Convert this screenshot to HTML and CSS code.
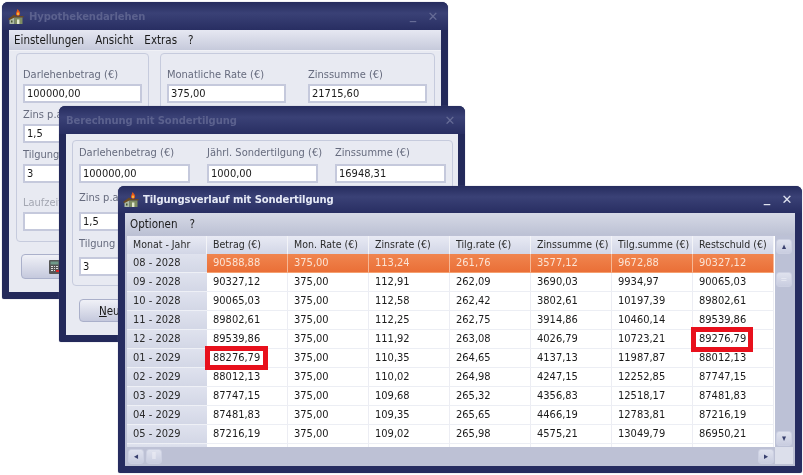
FILE: index.html
```html
<!DOCTYPE html>
<html lang="de">
<head>
<meta charset="utf-8">
<title>Tilgungsverlauf</title>
<link rel="stylesheet" href="styles.css">
</head>
<body>
<svg class="defs" width="0" height="0" aria-hidden="true">
  <symbol id="house" viewBox="0 0 17 15">
    <path d="M9.5 0 C11.5 2 12.5 3.5 12 5.5 C11.6 7 8.6 7 8 5.5 C7.6 4 8.8 2.5 9.5 0z" fill="#e8581a"/>
    <ellipse cx="10" cy="4.8" rx="1" ry="1.5" fill="#f8c040"/>
    <path d="M0 10 6 5.5 8 7 15.5 7 15.5 8.5 7 8.5 2 11.5z" fill="#6b4a22"/>
    <path d="M1.5 11 6.5 8.5 6.5 15 1.5 15z" fill="#aebba4"/>
    <path d="M6.5 8.5 14.5 8.5 14.5 15 6.5 15z" fill="#7f8d62"/>
    <rect x="3" y="11.5" width="1.5" height="2" fill="#47552f"/>
    <rect x="9" y="10.5" width="2.4" height="4.5" fill="#e2e8cf"/>
  </symbol>
</svg>

<section class="win win-a">
  <header class="title"><svg class="ico"><use href="#house"/></svg><span class="title-text dim">Hypothekendarlehen</span><span class="ctl min dim">_</span><span class="ctl dim">✕</span></header>
  <div class="inner">
    <nav class="menu"><span>Einstellungen</span><span>Ansicht</span><span>Extras</span><span>?</span></nav>
    <div class="pane">
      <div class="groups-a">
        <div class="group g-left">
          <label class="lab">Darlehenbetrag (€)</label><div class="inp w-a">100000,00</div>
          <label class="lab l2">Zins p.a.</label><div class="inp w-a">1,5</div>
          <label class="lab l2">Tilgung</label><div class="inp w-a">3</div>
          <label class="lab l3 off">Laufzeit</label><div class="inp w-a"></div>
        </div>
        <div class="group g-right">
          <div class="cell"><label class="lab">Monatliche Rate (€)</label><div class="inp w-a">375,00</div></div>
          <div class="cell"><label class="lab">Zinssumme (€)</label><div class="inp w-a">21715,60</div></div>
        </div>
      </div>
      <button class="btn btn-a"><svg class="calc" viewBox="0 0 11 14"><rect width="11" height="14" rx="1" fill="#555"/><rect x="1.5" y="1.5" width="8" height="3" fill="#6f9a8a"/><path d="M2 6h2v1H2zM5 6h1v1H5zM7 6h2v1H7zM2 8h2v1H2zM5 8h1v1H5zM7 8h2v1H7zM2 10h2v1H2zM5 10h1v1H5z" fill="#ddd"/><rect x="7" y="10" width="3" height="2" fill="#e02020"/></svg></button>
    </div>
  </div>
</section>

<section class="win win-b">
  <header class="title"><span class="title-text dim">Berechnung mit Sondertilgung</span><span class="ctl dim">✕</span></header>
  <div class="inner">
    <div class="pane pane-b">
      <div class="group g-b">
        <div class="row-b">
          <div class="cell"><label class="lab">Darlehenbetrag (€)</label><div class="inp w-b">100000,00</div></div>
          <div class="cell"><label class="lab">Jährl. Sondertilgung (€)</label><div class="inp w-b">1000,00</div></div>
          <div class="cell"><label class="lab">Zinssumme (€)</label><div class="inp w-b">16948,31</div></div>
        </div>
        <label class="lab l4">Zins p.a.</label><div class="inp w-b">1,5</div>
        <label class="lab l5">Tilgung p.a.</label><div class="inp w-b">3</div>
      </div>
      <button class="btn btn-b"><span><u>N</u>eu</span></button>
    </div>
  </div>
</section>

<section class="win win-c">
  <header class="title"><svg class="ico"><use href="#house"/></svg><span class="title-text">Tilgungsverlauf mit Sondertilgung</span><span class="ctl min">_</span><span class="ctl">✕</span></header>
  <div class="inner">
    <nav class="menu menu-c"><span>Optionen</span><span>?</span></nav>
    <div class="grid-wrap">
      <div class="grid-main">
        <div class="grid">
          <div class="r head"><b>Monat - Jahr</b><b>Betrag (€)</b><b>Mon. Rate (€)</b><b>Zinsrate (€)</b><b>Tilg.rate (€)</b><b>Zinssumme (€)</b><b>Tilg.summe (€)</b><b>Restschuld (€)</b></div>
          <div class="r sel"><b>08 - 2028</b><i>90588,88</i><i>375,00</i><i>113,24</i><i>261,76</i><i>3577,12</i><i>9672,88</i><i>90327,12</i></div>
          <div class="r"><b>09 - 2028</b><i>90327,12</i><i>375,00</i><i>112,91</i><i>262,09</i><i>3690,03</i><i>9934,97</i><i>90065,03</i></div>
          <div class="r"><b>10 - 2028</b><i>90065,03</i><i>375,00</i><i>112,58</i><i>262,42</i><i>3802,61</i><i>10197,39</i><i>89802,61</i></div>
          <div class="r"><b>11 - 2028</b><i>89802,61</i><i>375,00</i><i>112,25</i><i>262,75</i><i>3914,86</i><i>10460,14</i><i>89539,86</i></div>
          <div class="r"><b>12 - 2028</b><i>89539,86</i><i>375,00</i><i>111,92</i><i>263,08</i><i>4026,79</i><i>10723,21</i><i>89276,79</i></div>
          <div class="r"><b>01 - 2029</b><i>88276,79</i><i>375,00</i><i>110,35</i><i>264,65</i><i>4137,13</i><i>11987,87</i><i>88012,13</i></div>
          <div class="r"><b>02 - 2029</b><i>88012,13</i><i>375,00</i><i>110,02</i><i>264,98</i><i>4247,15</i><i>12252,85</i><i>87747,15</i></div>
          <div class="r"><b>03 - 2029</b><i>87747,15</i><i>375,00</i><i>109,68</i><i>265,32</i><i>4356,83</i><i>12518,17</i><i>87481,83</i></div>
          <div class="r"><b>04 - 2029</b><i>87481,83</i><i>375,00</i><i>109,35</i><i>265,65</i><i>4466,19</i><i>12783,81</i><i>87216,19</i></div>
          <div class="r"><b>05 - 2029</b><i>87216,19</i><i>375,00</i><i>109,02</i><i>265,98</i><i>4575,21</i><i>13049,79</i><i>86950,21</i></div>
          <div class="r last"><b></b><i></i><i></i><i></i><i></i><i></i><i></i><i></i></div>
        </div>
        <div class="hbar"><span class="sb-btn">◂</span><span class="sb-btn thumb">⦀</span><span class="spacer"></span><span class="sb-btn">▸</span></div>
      </div>
      <div class="vbar"><span class="sb-btn v up">▴</span><span class="sb-btn v thumb">=</span><span class="spacer"></span><span class="sb-btn v">▾</span><span class="corner"></span></div>
    </div>
    <span class="mark m1"></span>
    <span class="mark m2"></span>
  </div>
</section>
</body>
</html>
```
FILE: styles.css
```css
* { box-sizing: border-box; }
html, body { margin: 0; padding: 0; }
body {
  width: 803px; height: 475px; overflow: hidden; background: #fff; position: relative;
  font-family: "DejaVu Sans Condensed", "DejaVu Sans", sans-serif; font-stretch: condensed; font-size: 10.5px; color: #1a1a1a;
}
.defs { position: absolute; }
.win {
  position: absolute; display: flex; flex-direction: column;
  background: #23295a; border-radius: 6px 6px 2px 2px; padding: 0 7px 7px;
  box-shadow: 0 0 1px #7a7f9a; filter: blur(.3px);
}
.win-a { left: 2px; top: 2px; width: 446px; height: 297px; }
.win-b { left: 59px; top: 106px; width: 406px; height: 236px; }
.win-c { left: 118px; top: 186px; width: 684px; height: 287px; background: #262c60; }
.title {
  display: flex; align-items: center; flex: none; height: 28px;
  background: linear-gradient(#262c5e, #3a4176 40%, #282e62);
  margin: 0 -7px; padding: 0 5px 0 6px; border-radius: 6px 6px 0 0;
}
.win-c .title { height: 27px; padding-left: 5px; }
.win-c .ico { margin-right: 3px; }
.win-b .title { padding-left: 7px; }
.ico { width: 17px; height: 15px; flex: none; margin-right: 4px; }
.title-text { font: bold 10px "DejaVu Sans", sans-serif; letter-spacing: -.1px; color: #e6eaf6; flex: 1; white-space: nowrap; }
.title-text.dim { color: #5b618e; }
.ctl { width: 20px; text-align: center; color: #dfe3f0; font: bold 13px "DejaVu Sans", sans-serif; }
.ctl.dim { color: #666c96; }
.ctl.min { margin-top: -4px; }
.inner { flex: 1; display: flex; flex-direction: column; position: relative; background: #e8eaf2; min-height: 0; }
.menu {
  display: flex; flex: none; gap: 11px; height: 21px; align-items: center; padding: 0 5px;
  background: linear-gradient(#e6e8f2, #c6cadb); border-bottom: 1px solid #f0f1f6; color: #1a1a1a; font-size: 11.5px;
}
.pane { flex: 1; padding: 2px 6px 0 7px; display: flex; flex-direction: column; }
.pane-b { padding: 6px 12px 0 6px; }
.groups-a { display: flex; gap: 11px; height: 189px; flex: none; }
.group { border: 1px solid #c6cbdd; border-radius: 4px; padding: 14px 6px 0; color: #6d7286; }
.g-left { width: 133px; }
.g-right { width: 275px; display: flex; gap: 22px; }
.g-b { height: 146px; flex: none; width: 381px; padding-top: 5px; }
.row-b { display: grid; grid-template-columns: repeat(3, 111px); column-gap: 17px; }
.lab { display: block; height: 13px; line-height: 13px; color: #666b7e; white-space: nowrap; font-size: 11px; }
.l2 { margin-top: 5px; }
.l3 { margin-top: 13px; }
.l4 { margin: 8px 0 8px; }
.l5 { margin: 6px 0 7px; }
.off { color: #a4a7b2; }
.inp {
  height: 19px; line-height: 16px; margin-top: 3px; padding-left: 2px; background: #fff;
  border: 2px solid #c5c9dc; color: #1a1a1a; white-space: nowrap; font-size: 11px;
}
.w-a { width: 119px; }
.w-b { width: 111px; margin-top: 5px; }
.btn {
  display: flex; align-items: center; justify-content: flex-start; cursor: default;
  border: 1px solid #aab0ca; border-radius: 4px; background: linear-gradient(#f0f1f7, #c5c9dd);
  font: 11.5px "DejaVu Sans Condensed", "DejaVu Sans", sans-serif; color: #1a1a1a;
}
.btn-a { width: 118px; height: 25px; margin: 12px 0 0 5px; padding: 0 0 0 27px; }
.calc { width: 11px; height: 14px; }
.btn-b { width: 110px; height: 23px; margin: 13px 0 0 7px; padding: 0 0 0 19px; }
.menu-c { height: 22px; gap: 12px; padding: 0 5px; background: linear-gradient(#d6d9e6, #bcc1d4); border: 0; }
.grid-wrap { flex: 1; display: flex; min-height: 0; padding: 1px 2px 2px 2px; background: #bdc1d5; }
.grid-main { width: 649px; display: flex; flex-direction: column; min-height: 0; }
.grid { height: 211px; overflow: hidden; background: #fff; flex: none; }
.r { display: grid; grid-template-columns: 80px repeat(7, 81px); height: 19px; line-height: 18px; white-space: nowrap; font-size: 11px; }
.r b, .r i { font-weight: 400; font-style: normal; overflow: hidden; }
.r b { background: linear-gradient(#dfe2ee, #d3d7e6); border-bottom: 1px solid #eef0f6; padding-left: 6px; color: #2a2a2a; }
.r i { border-right: 1px solid #ecedf3; border-bottom: 1px solid #eceef4; padding-left: 6px; color: #1a1a1a; }
.head { height: 18px; line-height: 17px; }
.head b { padding-left: 6px; background: linear-gradient(#e8eaf4, #d2d6e6); border-right: 1px solid #f3f4f8; border-bottom: 0; font-size: 10.5px; }
.sel i { background: linear-gradient(#f0854f, #ea6f37); color: #fbe3d4; border-right-color: #f6b896; border-bottom-color: #f5a070; }
.last { height: 8px; }
.hbar { display: flex; flex: 1; padding: 1px 1px 0 1px; gap: 2px; align-items: center; }
.spacer { flex: 1; }
.sb-btn {
  display: flex; align-items: center; justify-content: center; width: 16px; height: 15px; flex: none;
  background: linear-gradient(#dfe2ee, #c9cde0); border: 1px solid #ccd0e2; border-radius: 3px;
  color: #39406e; font-size: 9px; line-height: 1;
}
.thumb { color: #f1f2f8; }
.vbar { width: 18px; display: flex; flex-direction: column; align-items: center; padding: 3px 0 0 0; background: #bcc1d6; }
.v { height: 15px; }
.up { margin-bottom: 18px; }
.corner { width: 18px; height: 17px; background: #dcdfeb; margin-top: 1px; flex: none; }
.mark { position: absolute; border: 5px solid #e8101c; background: transparent; width: 63px; height: 24px; }
.m1 { left: 80px; top: 133px; }
.m2 { left: 566px; top: 114px; width: 62px; height: 25px; }
```
